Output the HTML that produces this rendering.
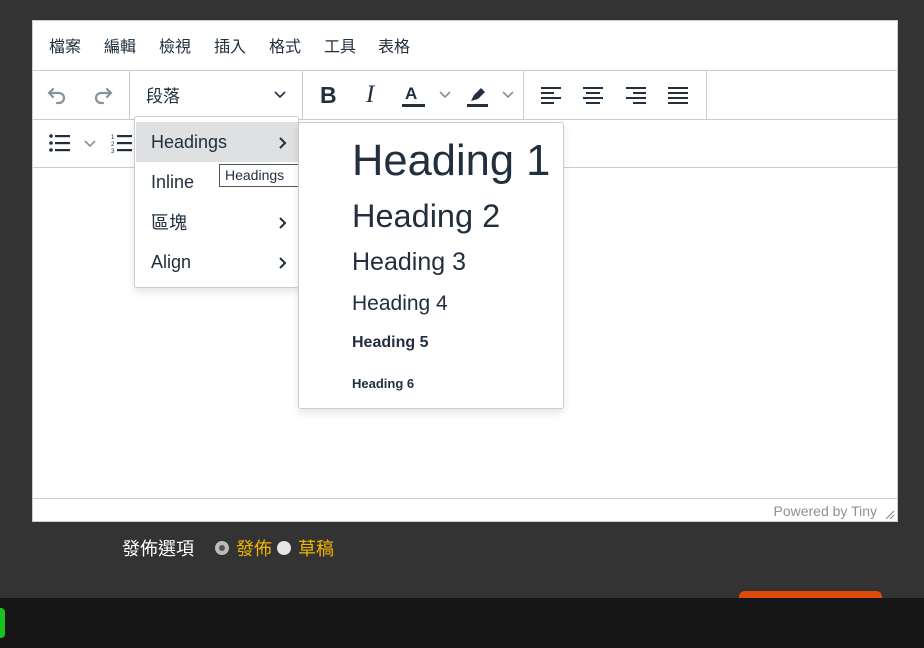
<!DOCTYPE html>
<html><head><meta charset="utf-8"><style>
*{box-sizing:border-box;margin:0;padding:0}
body{width:924px;height:648px;background:#333;position:relative;overflow:hidden;font-family:"Liberation Sans","Noto Sans CJK TC",sans-serif;color:#222f3e}
.ab{position:absolute}
.ed{left:32px;top:20px;width:866px;height:502px;background:#fff;border:1px solid #ccc}
.menu span{position:absolute;top:12px;font-size:16px;color:#222f3e}
.hl{position:absolute;left:0;right:0;height:1px;background:#ccc}
.vl{position:absolute;width:1px;background:#ccc}
svg{position:absolute}
.mi{position:absolute;left:16px;font-size:18px;color:#222f3e}
.ch{position:absolute;left:142px}
.h{position:absolute;left:53px;color:#222f3e;white-space:nowrap}
</style></head><body>
<div class="ab ed">
 <div class="menu">
  <span style="left:16px">檔案</span><span style="left:71px">編輯</span><span style="left:126px">檢視</span><span style="left:181px">插入</span><span style="left:236px">格式</span><span style="left:291px">工具</span><span style="left:345px">表格</span>
 </div>
 <div class="hl" style="top:49px"></div>
 <div class="hl" style="top:98px"></div>
 <div class="hl" style="top:146px"></div>
 <div class="hl" style="top:477px"></div>
 <div class="vl" style="left:96px;top:50px;height:48px"></div>
 <div class="vl" style="left:269px;top:50px;height:48px"></div>
 <div class="vl" style="left:490px;top:50px;height:48px"></div>
 <div class="vl" style="left:673px;top:50px;height:48px"></div>
 <svg style="left:12px;top:63px" width="24" height="24" viewBox="0 0 24 24" fill="none" stroke="#8a9199" stroke-width="2.2" stroke-linecap="round"><path d="M8 5 L4 9 L8 13 M4 9 H14 a5 5 0 0 1 0 10 H12"/></svg>
 <svg style="left:58px;top:63px" width="24" height="24" viewBox="0 0 24 24" fill="none" stroke="#8a9199" stroke-width="2.2" stroke-linecap="round"><path d="M16 5 L20 9 L16 13 M20 9 H10 a5 5 0 0 0 0 10 H12"/></svg>
 <span class="ab" style="left:113px;top:61px;font-size:17px">段落</span>
 <svg style="left:240px;top:69px" width="14" height="10" viewBox="0 0 14 10" fill="none" stroke="#222f3e" stroke-width="1.6"><path d="M2 2 L7 7 L12 2"/></svg>
 <span class="ab" style="left:287px;top:61px;font-size:23px;font-weight:bold">B</span>
 <span class="ab" style="left:333px;top:60px;font-size:25px;font-style:italic;font-family:'Liberation Serif',serif">I</span>
 <span class="ab" style="left:372px;top:63px;font-size:17px;font-weight:bold">A</span>
 <div class="ab" style="left:369px;top:83px;width:23px;height:3px;background:#222f3e"></div>
 <svg style="left:405px;top:69px" width="14" height="10" viewBox="0 0 14 10" fill="none" stroke="#8a9199" stroke-width="1.6"><path d="M2 2 L7 7 L12 2"/></svg>
 <svg style="left:432px;top:63px" width="24" height="24" viewBox="0 0 24 24"><path d="M6 17 L9 11 L16 4 L20 8 L13 15 Z" fill="#222f3e"/><rect x="2" y="20" width="21" height="3" fill="#222f3e"/></svg>
 <svg style="left:468px;top:69px" width="14" height="10" viewBox="0 0 14 10" fill="none" stroke="#8a9199" stroke-width="1.6"><path d="M2 2 L7 7 L12 2"/></svg>
 <svg style="left:507px;top:64px" width="22" height="20" viewBox="0 0 22 20" fill="#222f3e"><rect x="1" y="2" width="20" height="2"/><rect x="1" y="7" width="13" height="2"/><rect x="1" y="12" width="20" height="2"/><rect x="1" y="17" width="13" height="2"/></svg>
 <svg style="left:549px;top:64px" width="22" height="20" viewBox="0 0 22 20" fill="#222f3e"><rect x="1" y="2" width="20" height="2"/><rect x="4" y="7" width="14" height="2"/><rect x="1" y="12" width="20" height="2"/><rect x="4" y="17" width="14" height="2"/></svg>
 <svg style="left:592px;top:64px" width="22" height="20" viewBox="0 0 22 20" fill="#222f3e"><rect x="1" y="2" width="20" height="2"/><rect x="8" y="7" width="13" height="2"/><rect x="1" y="12" width="20" height="2"/><rect x="8" y="17" width="13" height="2"/></svg>
 <svg style="left:634px;top:64px" width="22" height="20" viewBox="0 0 22 20" fill="#222f3e"><rect x="1" y="2" width="20" height="2"/><rect x="1" y="7" width="20" height="2"/><rect x="1" y="12" width="20" height="2"/><rect x="1" y="17" width="20" height="2"/></svg>
 <svg style="left:16px;top:112px" width="22" height="20" viewBox="0 0 22 20" fill="#222f3e"><circle cx="2" cy="3" r="1.8"/><circle cx="2" cy="10" r="1.8"/><circle cx="2" cy="17" r="1.8"/><rect x="6" y="2" width="15" height="2.2"/><rect x="6" y="9" width="15" height="2.2"/><rect x="6" y="16" width="15" height="2.2"/></svg>
 <svg style="left:50px;top:118px" width="14" height="10" viewBox="0 0 14 10" fill="none" stroke="#8a9199" stroke-width="1.6"><path d="M2 2 L7 7 L12 2"/></svg>
 <svg style="left:78px;top:112px" width="22" height="20" viewBox="0 0 22 20" fill="#222f3e"><text x="0" y="6" font-size="6" font-family="Liberation Sans">1</text><text x="0" y="13" font-size="6" font-family="Liberation Sans">2</text><text x="0" y="20" font-size="6" font-family="Liberation Sans">3</text><rect x="6" y="2" width="15" height="2.2"/><rect x="6" y="9" width="15" height="2.2"/><rect x="6" y="16" width="15" height="2.2"/></svg>
 <span class="ab" style="right:20px;top:482px;font-size:14px;color:#8a9199">Powered by Tiny</span>
 <svg style="right:2px;top:487px" width="12" height="12" viewBox="0 0 12 12" stroke="#8a9199" stroke-width="1.2"><path d="M11 3 L3 11 M11 7 L7 11"/></svg>
</div>
<div class="ab" style="left:134px;top:116px;width:165px;height:172px;background:#fff;border:1px solid #ccc;border-radius:3px;box-shadow:0 4px 8px rgba(0,0,0,.1)">
 <div class="ab" style="left:1px;top:5px;width:162px;height:40px;background:#dee0e2"></div>
 <span class="mi" style="top:15px">Headings</span>
 <svg class="ch" style="top:19px" width="10" height="14" viewBox="0 0 10 14" fill="none" stroke="#222f3e" stroke-width="2"><path d="M3 2 L8 7 L3 12"/></svg>
 <span class="mi" style="top:55px">Inline</span>
 <span class="mi" style="top:92px">區塊</span>
 <svg class="ch" style="top:99px" width="10" height="14" viewBox="0 0 10 14" fill="none" stroke="#222f3e" stroke-width="2"><path d="M3 2 L8 7 L3 12"/></svg>
 <span class="mi" style="top:135px">Align</span>
 <svg class="ch" style="top:139px" width="10" height="14" viewBox="0 0 10 14" fill="none" stroke="#222f3e" stroke-width="2"><path d="M3 2 L8 7 L3 12"/></svg>
</div>
<div class="ab" style="left:219px;top:164px;width:80px;height:23px;background:#fff;border:1px solid #555;font-size:14px;padding:2px 5px;color:#222f3e">Headings</div>
<div class="ab" style="left:298px;top:122px;width:266px;height:287px;background:#fff;border:1px solid #ccc;border-radius:3px;box-shadow:0 4px 8px rgba(0,0,0,.1)">
 <span class="h" style="top:14px;font-size:43.5px">Heading 1</span>
 <span class="h" style="top:75px;font-size:32.5px">Heading 2</span>
 <span class="h" style="top:125px;font-size:25px">Heading 3</span>
 <span class="h" style="top:169px;font-size:21px">Heading 4</span>
 <span class="h" style="top:211px;font-size:16px;font-weight:bold">Heading 5</span>
 <span class="h" style="top:253px;font-size:13px;font-weight:bold">Heading 6</span>
</div>
<span class="ab" style="left:122px;top:535px;font-size:18px;color:#fff">發佈選項</span>
<div class="ab" style="left:215px;top:541px;width:14px;height:14px;border-radius:50%;background:#ddd;border:4px solid #bbb"><div style="width:6px;height:6px;border-radius:50%;background:#555"></div></div>
<span class="ab" style="left:236px;top:535px;font-size:18px;color:#f0b400">發佈</span>
<div class="ab" style="left:277px;top:541px;width:14px;height:14px;border-radius:50%;background:#e6e6e6"></div>
<span class="ab" style="left:298px;top:535px;font-size:18px;color:#f0b400">草稿</span>
<div class="ab" style="left:739px;top:591px;width:143px;height:20px;background:#e04a0a;border-radius:6px"></div>
<div class="ab" style="left:0;top:598px;width:924px;height:50px;background:#161616"></div>
<div class="ab" style="left:-6px;top:608px;width:11px;height:30px;background:#1bc11b;border-radius:4px"></div>
</body></html>
